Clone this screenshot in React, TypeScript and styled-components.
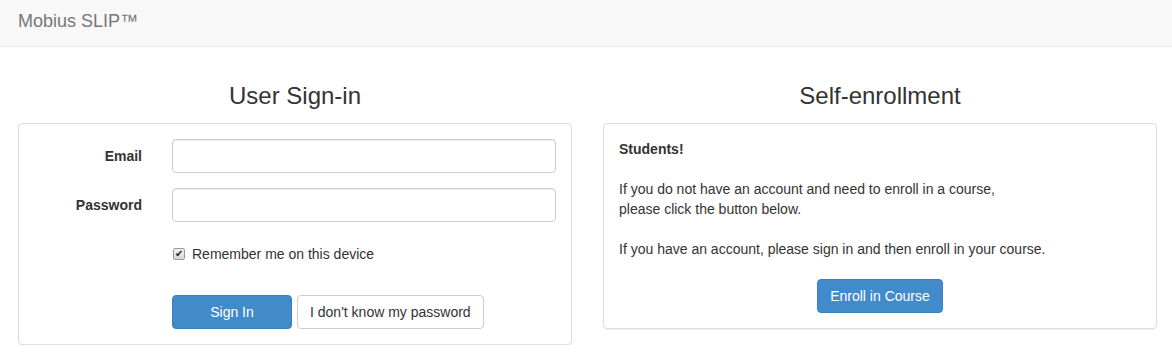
import styled, { createGlobalStyle } from 'styled-components';

const GlobalStyle = createGlobalStyle`
  html, body {
    margin: 0;
    padding: 0;
    background: #fff;
  }
  body {
    font-family: 'Liberation Sans', Arial, sans-serif;
    font-size: 14px;
    line-height: 20px;
    color: #333;
  }
  * {
    box-sizing: border-box;
  }
`;

export default function App() {
  return (
    <>
      <GlobalStyle />
      <SNavbar>
        <SBrand>Mobius SLIP™</SBrand>
      </SNavbar>
      <SMain>
        <SColumn>
          <SHeading>User Sign-in</SHeading>
          <SPanel>
            <SFormGroup>
              <SLabel htmlFor="email">Email</SLabel>
              <SInput id="email" type="email" />
            </SFormGroup>
            <SFormGroup>
              <SLabel htmlFor="password">Password</SLabel>
              <SInput id="password" type="password" />
            </SFormGroup>
            <SFormGroup $check>
              <span />
              <SCheckLabel>
                <SCheck aria-hidden>✔</SCheck>
                Remember me on this device
              </SCheckLabel>
            </SFormGroup>
            <SFormGroup $last>
              <span />
              <SButtons>
                <SButton $primary $wide>Sign In</SButton>
                <SButton>I don't know my password</SButton>
              </SButtons>
            </SFormGroup>
          </SPanel>
        </SColumn>
        <SColumn>
          <SHeading>Self-enrollment</SHeading>
          <SPanel>
            <SText>
              <strong>Students!</strong>
            </SText>
            <SText>
              If you do not have an account and need to enroll in a course,
              <br />
              please click the button below.
            </SText>
            <SText>If you have an account, please sign in and then enroll in your course.</SText>
            <SCenter>
              <SButton $primary>Enroll in Course</SButton>
            </SCenter>
          </SPanel>
        </SColumn>
      </SMain>
    </>
  );
}

const SNavbar = styled.header`
  height: 47px;
  padding: 11px 18px 0;
  background-color: #f8f8f8;
  border-bottom: 1px solid #e7e7e7;
`;

const SBrand = styled.span`
  font-size: 18px;
  line-height: 20px;
  color: #777;
`;

const SMain = styled.main`
  display: grid;
  grid-template-columns: 554px 554px;
  column-gap: 31px;
  padding: 0 15px 0 18px;
`;

const SColumn = styled.section`
  display: flex;
  flex-direction: column;
  align-items: stretch;
`;

const SHeading = styled.h3`
  margin: 36px 0 14px;
  font-size: 24px;
  font-weight: 500;
  line-height: 26px;
  text-align: center;
  color: #333;
`;

const SPanel = styled.div`
  padding: 15px;
  border: 1px solid #ddd;
  border-radius: 4px;
  background: #fff;
  box-shadow: 0 1px 1px rgba(0, 0, 0, 0.05);
  align-self: start;
  width: 100%;
`;

const SFormGroup = styled.div<{ $last?: boolean; $check?: boolean }>`
  display: grid;
  grid-template-columns: 108px 384px;
  column-gap: 30px;
  align-items: center;
  min-height: ${(p) => (p.$check ? '20px' : '34px')};
  margin: ${(p) => (p.$check ? '22px 0 31px' : '0')};
  margin-bottom: ${(p) => (p.$check ? '31px' : p.$last ? '0' : '15px')};
`;

const SLabel = styled.label`
  text-align: right;
  font-weight: bold;
  color: #333;
`;

const SInput = styled.input`
  display: block;
  width: 100%;
  height: 34px;
  padding: 6px 12px;
  font: inherit;
  border: 1px solid #ccc;
  border-radius: 4px;
  box-shadow: inset 0 1px 1px rgba(0, 0, 0, 0.075);
  outline: none;
`;

const SCheckLabel = styled.label`
  display: flex;
  align-items: center;
  gap: 7px;
  color: #333;
`;

const SCheck = styled.span`
  display: inline-flex;
  align-items: center;
  justify-content: center;
  width: 12px;
  height: 12px;
  margin-left: 1px;
  border: 1px solid #9a9a9a;
  border-radius: 2px;
  background: linear-gradient(#f0f0f0, #d8d8d8);
  color: #222;
  font-size: 10px;
  line-height: 1;
`;

const SButtons = styled.div`
  display: flex;
  gap: 5px;
`;

const SButton = styled.button<{ $primary?: boolean; $wide?: boolean }>`
  height: 34px;
  padding: 6px 12px;
  width: ${(p) => (p.$wide ? '120px' : 'auto')};
  font-family: 'Liberation Sans', Arial, sans-serif;
  font-size: 14px;
  line-height: 20px;
  border-radius: 4px;
  border: 1px solid ${(p) => (p.$primary ? '#3c81bd' : '#ccc')};
  background: ${(p) => (p.$primary ? '#428bca' : '#fff')};
  color: ${(p) => (p.$primary ? '#fff' : '#333')};
  cursor: pointer;
`;

const SText = styled.p`
  margin: 0 0 20px;
`;

const SCenter = styled.div`
  display: flex;
  justify-content: center;
`;
